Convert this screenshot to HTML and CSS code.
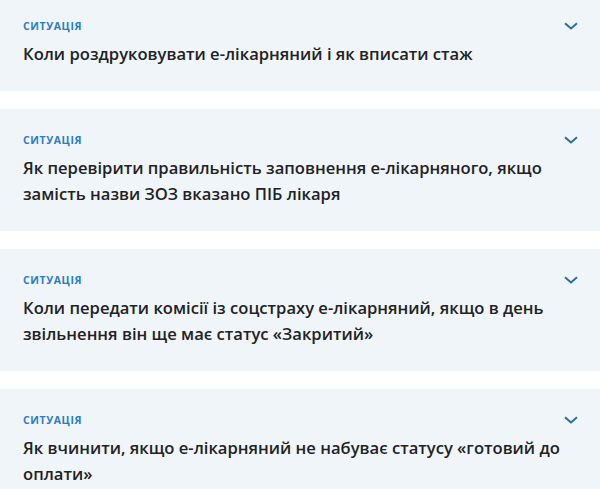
FILE: index.html
```html
<!DOCTYPE html>
<html lang="uk">
<head>
<meta charset="utf-8">
<link rel="stylesheet" href="styles.css">
</head>
<body>
<div class="list">
  <div class="card">
    <div class="head">
      <div class="label">Ситуація</div>
      <svg class="chev" width="14" height="8" viewBox="0 0 14 8"><path d="M1 1.2l6 5.3L13 1.2" fill="none" stroke="currentColor" stroke-width="2"/></svg>
    </div>
    <div class="title">Коли роздруковувати е-лікарняний і як вписати стаж</div>
  </div>
  <div class="card">
    <div class="head">
      <div class="label">Ситуація</div>
      <svg class="chev" width="14" height="8" viewBox="0 0 14 8"><path d="M1 1.2l6 5.3L13 1.2" fill="none" stroke="currentColor" stroke-width="2"/></svg>
    </div>
    <div class="title">Як перевірити правильність заповнення е-лікарняного, якщо замість назви ЗОЗ вказано ПІБ лікаря</div>
  </div>
  <div class="card">
    <div class="head">
      <div class="label">Ситуація</div>
      <svg class="chev" width="14" height="8" viewBox="0 0 14 8"><path d="M1 1.2l6 5.3L13 1.2" fill="none" stroke="currentColor" stroke-width="2"/></svg>
    </div>
    <div class="title">Коли передати комісії із соцстраху е-лікарняний, якщо в день звільнення він ще має статус «Закритий»</div>
  </div>
  <div class="card">
    <div class="head">
      <div class="label">Ситуація</div>
      <svg class="chev" width="14" height="8" viewBox="0 0 14 8"><path d="M1 1.2l6 5.3L13 1.2" fill="none" stroke="currentColor" stroke-width="2"/></svg>
    </div>
    <div class="title">Як вчинити, якщо е-лікарняний не набуває статусу «готовий до оплати»</div>
  </div>
</div>
</body>
</html>
```
FILE: styles.css
```css
html, body {
  margin: 0;
  padding: 0;
  background: #ffffff;
}
body {
  font-family: "Open Sans", "DejaVu Sans", sans-serif;
  overflow: hidden;
}
.list {
  display: flex;
  flex-direction: column;
  gap: 18px;
  margin-top: -5px;
}
.card {
  background: #f0f5fa;
  padding: 24px 22px 24px 23px;
}
.head {
  display: flex;
  justify-content: space-between;
  align-items: center;
  height: 14px;
}
.label {
  font-size: 10.5px;
  line-height: 14px;
  font-weight: 700;
  letter-spacing: 0.6px;
  text-transform: uppercase;
  color: #2a7dc2;
}
.chev {
  color: #2c6d9c;
}
.title {
  margin-top: 8px;
  font-size: 16.6px;
  line-height: 26px;
  font-weight: 600;
  color: #222;
  padding-right: 17px;
}
```
